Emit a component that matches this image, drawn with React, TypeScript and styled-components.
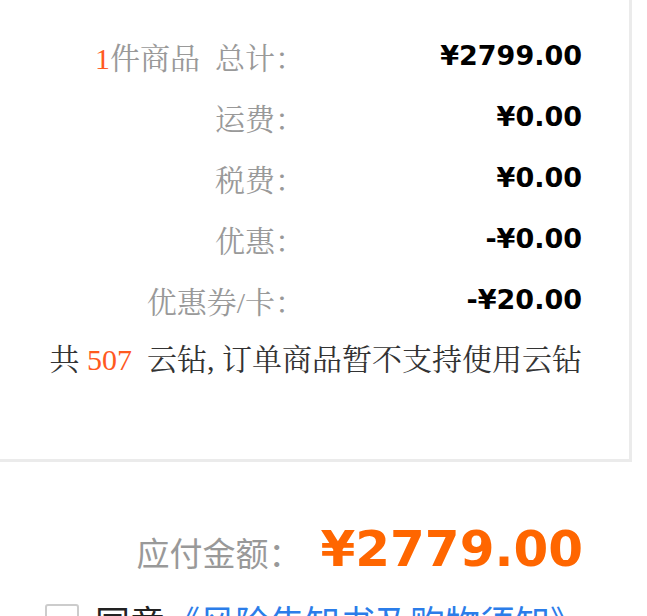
import React, { FC } from "react";
import styled, { createGlobalStyle } from "styled-components";

const GlobalStyle = createGlobalStyle`
  html, body {
    margin: 0;
    padding: 0;
    background: #fff;
    overflow: hidden;
  }
`;

const serifStack = `"Liberation Serif", "Noto Serif CJK SC", "AR PL UMing CN", "Noto Sans CJK SC", serif`;

const Page = styled.div`
  width: 647px;
  height: 616px;
  overflow: hidden;
`;

const Card = styled.div`
  width: 629px;
  border-right: 3px solid #ebebeb;
  border-bottom: 3px solid #ebebeb;
  box-sizing: content-box;
  padding: 25px 0 0 0;
  height: 434px;
`;

const Row = styled.div`
  display: grid;
  grid-template-columns: 305px 277px;
  height: 61px;
  align-items: center;
`;

const Label = styled.div`
  text-align: right;
  font-family: ${serifStack};
  font-size: 30px;
  color: #999;
  white-space: nowrap;
`;

const Value = styled.div`
  text-align: right;
  font-family: "DejaVu Sans", sans-serif;
  font-weight: bold;
  font-size: 27px;
  color: #000;
`;

const Accent = styled.span<{ $color?: string }>`
  color: ${(p) => p.$color || "#ff5a1f"};
`;

const Notice = styled.div`
  width: 582px;
  text-align: right;
  height: 60px;
  line-height: 60px;
  font-family: ${serifStack};
  font-size: 30px;
  color: #333;
  white-space: nowrap;
`;

const TotalRow = styled.div`
  width: 583px;
  display: flex;
  justify-content: flex-end;
  align-items: baseline;
  margin-top: 58px;
  height: 62px;
`;

const TotalLabel = styled.span`
  font-family: "Noto Sans CJK SC", sans-serif;
  font-size: 33px;
  color: #999;
  margin-right: 19px;
`;

const TotalValue = styled.span`
  font-family: "DejaVu Sans", sans-serif;
  font-weight: bold;
  font-size: 50px;
  color: #ff6600;
`;

const Agree = styled.div`
  display: flex;
  align-items: center;
  padding-left: 45px;
  margin-top: 13px;
  font-family: "Noto Sans CJK SC", sans-serif;
  font-size: 35px;
  color: #222;
  white-space: nowrap;
`;

const Box = styled.span`
  width: 30px;
  height: 30px;
  border: 2px solid #ccc;
  border-radius: 3px;
  margin-right: 16px;
  flex: none;
`;

const Link = styled.a`
  color: #2b7de9;
  text-decoration: none;
`;

const rows: { label: React.ReactNode; value: string }[] = [
  {
    label: (
      <>
        <Accent>1</Accent>件商品&nbsp;&nbsp;总计：
      </>
    ),
    value: "¥2799.00",
  },
  { label: "运费：", value: "¥0.00" },
  { label: "税费：", value: "¥0.00" },
  { label: "优惠：", value: "-¥0.00" },
  { label: "优惠券/卡：", value: "-¥20.00" },
];

const App: FC = () => {
  return (
    <Page>
      <GlobalStyle />
      <Card>
        {rows.map((r, i) => (
          <Row key={i}>
            <Label>{r.label}</Label>
            <Value>{r.value}</Value>
          </Row>
        ))}
        <Notice>
          共 <Accent>507</Accent>&nbsp;&nbsp;云钻, 订单商品暂不支持使用云钻
        </Notice>
      </Card>
      <TotalRow>
        <TotalLabel>应付金额：</TotalLabel>
        <TotalValue>¥2779.00</TotalValue>
      </TotalRow>
      <Agree>
        <Box />
        同意
        <Link href="#">《风险告知书及购物须知》</Link>
      </Agree>
    </Page>
  );
};

export default App;
